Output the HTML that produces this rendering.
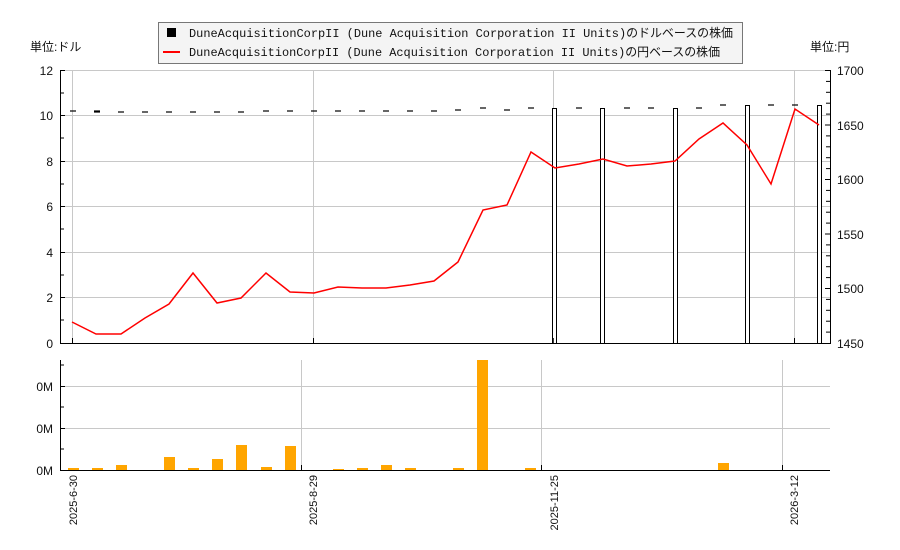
<!DOCTYPE html>
<html><head><meta charset="utf-8"><style>
body{margin:0;background:#fff;}
svg{display:block;}
text{font-family:"Liberation Sans","Noto Sans CJK JP",sans-serif;font-size:12px;fill:#111;}
.m{font-family:"Liberation Mono","Noto Sans CJK JP",monospace;}
</style></head><body>
<svg width="900" height="550" viewBox="0 0 900 550" xmlns="http://www.w3.org/2000/svg">
<rect width="900" height="550" fill="#fff"/>
<!-- top grid -->
<g stroke="#c8c8c8" stroke-width="1">
<line x1="60" y1="70.5" x2="830" y2="70.5"/>
<line x1="60" y1="115.5" x2="830" y2="115.5"/>
<line x1="60" y1="161.5" x2="830" y2="161.5"/>
<line x1="60" y1="206.5" x2="830" y2="206.5"/>
<line x1="60" y1="252.5" x2="830" y2="252.5"/>
<line x1="60" y1="297.5" x2="830" y2="297.5"/>
<line x1="72.5" y1="70" x2="72.5" y2="343"/>
<line x1="313.5" y1="70" x2="313.5" y2="343"/>
<line x1="553.5" y1="70" x2="553.5" y2="343"/>
<line x1="794.5" y1="70" x2="794.5" y2="343"/>
</g>
<!-- dashes -->
<g stroke="#000" stroke-width="1.2">
<line x1="70" y1="111" x2="76" y2="111"/>
<line x1="94" y1="111.5" x2="100" y2="111.5" stroke-width="2.2"/>
<line x1="118" y1="112" x2="124" y2="112"/>
<line x1="142" y1="112" x2="148" y2="112"/>
<line x1="166" y1="112" x2="172" y2="112"/>
<line x1="190" y1="112" x2="196" y2="112"/>
<line x1="214" y1="112" x2="220" y2="112"/>
<line x1="238" y1="112" x2="244" y2="112"/>
<line x1="263" y1="111" x2="269" y2="111"/>
<line x1="287" y1="111" x2="293" y2="111"/>
<line x1="311" y1="111" x2="317" y2="111"/>
<line x1="335" y1="111" x2="341" y2="111"/>
<line x1="359" y1="111" x2="365" y2="111"/>
<line x1="383" y1="111" x2="389" y2="111"/>
<line x1="407" y1="111" x2="413" y2="111"/>
<line x1="431" y1="111" x2="437" y2="111"/>
<line x1="455" y1="110" x2="461" y2="110"/>
<line x1="480" y1="108" x2="486" y2="108"/>
<line x1="504" y1="110" x2="510" y2="110"/>
<line x1="528" y1="108" x2="534" y2="108"/>
<line x1="576" y1="108" x2="582" y2="108"/>
<line x1="624" y1="108" x2="630" y2="108"/>
<line x1="648" y1="108" x2="654" y2="108"/>
<line x1="696" y1="108" x2="702" y2="108"/>
<line x1="720" y1="105" x2="726" y2="105"/>
<line x1="768" y1="105" x2="774" y2="105"/>
<line x1="792" y1="105" x2="798" y2="105"/>
</g>
<!-- tall bars -->
<g fill="#fff" stroke="#000" stroke-width="1">
<rect x="552.5" y="108.5" width="4" height="235"/>
<rect x="600.5" y="108.5" width="4" height="235"/>
<rect x="673.5" y="108.5" width="4" height="235"/>
<rect x="745.5" y="105.5" width="4" height="238"/>
<rect x="817.5" y="105.5" width="4" height="238"/>
</g>
<line x1="553" y1="338" x2="553" y2="343" stroke="#000" stroke-width="1.5"/>
<polyline fill="none" stroke="#f00" stroke-width="1.5" points="72,322 96,334 121,334 145,318 169,304 193,273 217,303 241,298 266,273 290,292 314,293 338,287 362,288 386,288 410,285 434,281 458,262 483,210 507,205 531,152 555,168 579,164 603,159 627,166 651,164 675,161 699,139 723,123 747,145 771,184 795,109 819,125"/>
<!-- axes top -->
<g stroke="#000" stroke-width="1">
<line x1="60.5" y1="70" x2="60.5" y2="343"/>
<line x1="830.5" y1="70" x2="830.5" y2="343"/>
<line x1="60" y1="343.5" x2="831" y2="343.5"/>
<line x1="60" y1="70.5" x2="65" y2="70.5"/><line x1="60" y1="93" x2="64" y2="93"/>
<line x1="60" y1="115.5" x2="65" y2="115.5"/><line x1="60" y1="138" x2="64" y2="138"/>
<line x1="60" y1="161.5" x2="65" y2="161.5"/><line x1="60" y1="184" x2="64" y2="184"/>
<line x1="60" y1="206.5" x2="65" y2="206.5"/><line x1="60" y1="229" x2="64" y2="229"/>
<line x1="60" y1="252.5" x2="65" y2="252.5"/><line x1="60" y1="275" x2="64" y2="275"/>
<line x1="60" y1="297.5" x2="65" y2="297.5"/><line x1="60" y1="320" x2="64" y2="320"/>
<line x1="72.5" y1="338" x2="72.5" y2="343"/>
<line x1="313.5" y1="338" x2="313.5" y2="343"/>
<line x1="794.5" y1="338" x2="794.5" y2="343"/>
</g>
<g stroke="#000" stroke-width="1">
<line x1="825" y1="70.5" x2="830" y2="70.5"/><line x1="826" y1="81.4" x2="830" y2="81.4"/><line x1="826" y1="92.3" x2="830" y2="92.3"/><line x1="826" y1="103.2" x2="830" y2="103.2"/><line x1="826" y1="114.1" x2="830" y2="114.1"/>
<line x1="825" y1="125" x2="830" y2="125"/><line x1="826" y1="135.9" x2="830" y2="135.9"/><line x1="826" y1="146.8" x2="830" y2="146.8"/><line x1="826" y1="157.7" x2="830" y2="157.7"/><line x1="826" y1="168.6" x2="830" y2="168.6"/>
<line x1="825" y1="179.5" x2="830" y2="179.5"/><line x1="826" y1="190.4" x2="830" y2="190.4"/><line x1="826" y1="201.3" x2="830" y2="201.3"/><line x1="826" y1="212.2" x2="830" y2="212.2"/><line x1="826" y1="223.1" x2="830" y2="223.1"/>
<line x1="825" y1="234" x2="830" y2="234"/><line x1="826" y1="244.9" x2="830" y2="244.9"/><line x1="826" y1="255.8" x2="830" y2="255.8"/><line x1="826" y1="266.7" x2="830" y2="266.7"/><line x1="826" y1="277.6" x2="830" y2="277.6"/>
<line x1="825" y1="288.5" x2="830" y2="288.5"/><line x1="826" y1="299.4" x2="830" y2="299.4"/><line x1="826" y1="310.3" x2="830" y2="310.3"/><line x1="826" y1="321.2" x2="830" y2="321.2"/><line x1="826" y1="332.1" x2="830" y2="332.1"/>
</g>
<g text-anchor="end">
<text x="53" y="75">12</text><text x="53" y="120">10</text><text x="53" y="166">8</text><text x="53" y="211">6</text><text x="53" y="257">4</text><text x="53" y="302">2</text><text x="53" y="348">0</text>
</g>
<g>
<text x="837" y="75">1700</text><text x="837" y="130">1650</text><text x="837" y="184">1600</text><text x="837" y="239">1550</text><text x="837" y="293">1500</text><text x="837" y="348">1450</text>
</g>
<text x="30" y="51">単位:ドル</text>
<text x="810" y="51">単位:円</text>
<!-- legend -->
<rect x="158.5" y="22.5" width="584" height="41" fill="#f4f4f4" stroke="#777"/>
<rect x="167" y="28" width="9" height="9" fill="#000"/>
<line x1="163" y1="52" x2="180" y2="52" stroke="#f00" stroke-width="2"/>
<text class="m" x="189" y="37" textLength="544" lengthAdjust="spacingAndGlyphs">DuneAcquisitionCorpII (Dune Acquisition Corporation II Units)のドルベースの株価</text>
<text class="m" x="189" y="56" textLength="531" lengthAdjust="spacingAndGlyphs">DuneAcquisitionCorpII (Dune Acquisition Corporation II Units)の円ベースの株価</text>
<!-- bottom panel -->
<g stroke="#c8c8c8" stroke-width="1">
<line x1="60" y1="386.5" x2="830" y2="386.5"/>
<line x1="60" y1="428.5" x2="830" y2="428.5"/>
<line x1="301.5" y1="360" x2="301.5" y2="470"/>
<line x1="541.5" y1="360" x2="541.5" y2="470"/>
<line x1="782.5" y1="360" x2="782.5" y2="470"/>
</g>
<g fill="#ffa500">
<rect x="68" y="468" width="11" height="2"/>
<rect x="92" y="468" width="11" height="2"/>
<rect x="116" y="465" width="11" height="5"/>
<rect x="164" y="457" width="11" height="13"/>
<rect x="188" y="468" width="11" height="2"/>
<rect x="212" y="459" width="11" height="11"/>
<rect x="236" y="445" width="11" height="25"/>
<rect x="261" y="467" width="11" height="3"/>
<rect x="285" y="446" width="11" height="24"/>
<rect x="333" y="469" width="11" height="1"/>
<rect x="357" y="468" width="11" height="2"/>
<rect x="381" y="465" width="11" height="5"/>
<rect x="405" y="468" width="11" height="2"/>
<rect x="453" y="468" width="11" height="2"/>
<rect x="477" y="360" width="11" height="110"/>
<rect x="525" y="468" width="11" height="2"/>
<rect x="718" y="463" width="11" height="7"/>
</g>
<g stroke="#000" stroke-width="1">
<line x1="60.5" y1="360" x2="60.5" y2="470"/>
<line x1="60" y1="470.5" x2="830" y2="470.5"/>
<line x1="60" y1="365" x2="64" y2="365"/><line x1="60" y1="386.5" x2="65" y2="386.5"/>
<line x1="60" y1="407" x2="64" y2="407"/><line x1="60" y1="428.5" x2="65" y2="428.5"/>
<line x1="60" y1="449" x2="64" y2="449"/>
<line x1="301.5" y1="465" x2="301.5" y2="470"/>
<line x1="541.5" y1="465" x2="541.5" y2="470"/>
<line x1="782.5" y1="465" x2="782.5" y2="470"/>
</g>
<g text-anchor="end">
<text x="53" y="391">0M</text><text x="53" y="433">0M</text><text x="53" y="475">0M</text>
</g>
<g text-anchor="end" font-size="11">
<text transform="translate(77,475) rotate(-90)" style="font-size:11px">2025-6-30</text>
<text transform="translate(317,475) rotate(-90)" style="font-size:11px">2025-8-29</text>
<text transform="translate(558,475) rotate(-90)" style="font-size:11px">2025-11-25</text>
<text transform="translate(798,475) rotate(-90)" style="font-size:11px">2026-3-12</text>
</g>
</svg>
</body></html>
